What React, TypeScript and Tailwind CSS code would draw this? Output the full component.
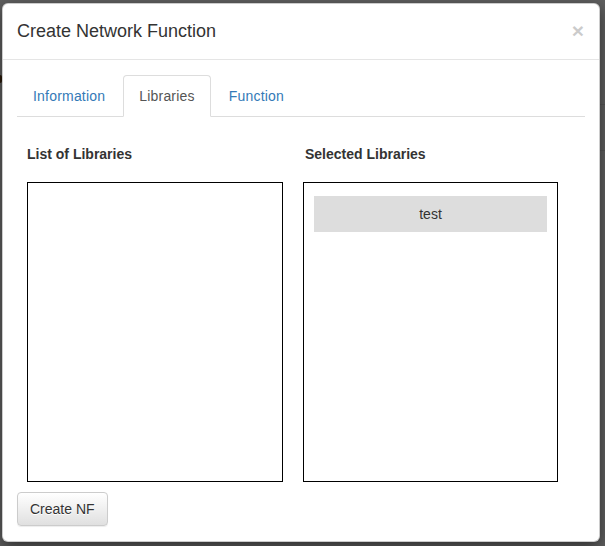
import React from 'react';

const tabs = ['Information', 'Libraries', 'Function'];

const App: React.FC = () => {
  const active = 'Libraries';
  const selected = ['test'];

  return (
    <div
      className="relative h-[546px] w-[605px] overflow-hidden bg-[#5f5f5f] pl-[2px] pt-[3px]"
      style={{ fontFamily: '"Liberation Sans", Arial, sans-serif' }}
    >
      {/* bits of the page behind the backdrop */}
      <div className="absolute left-0 top-[75px] h-[8px] w-[2px] rounded-r bg-[#2a1a0a]" />
      <div className="absolute right-0 top-[104px] h-px w-[6px] bg-[#555]" />
      <div className="absolute right-0 top-[150px] h-px w-[6px] bg-[#555]" />

      {/* Modal */}
      <div className="relative flex h-[539px] w-[598px] flex-col rounded-md border border-black/20 bg-white text-sm text-[#333] shadow-[0_5px_15px_rgba(0,0,0,0.5)]">
        {/* Header */}
        <div className="flex items-center justify-between border-b border-[#e5e5e5] px-[14px] pb-[15px] pt-[14px]">
          <h4 className="text-[18px] leading-[26px] text-[#333]">Create Network Function</h4>
          <button className="-mt-[2px] mr-[1px] text-[21px] font-bold leading-none text-black opacity-20">×</button>
        </div>

        {/* Body */}
        <div className="flex flex-1 flex-col px-[14px] py-[15px]">
          <ul className="flex border-b border-[#ddd]">
            {tabs.map((t) => (
              <li key={t} className="-mb-px mr-[2px]">
                <a
                  className={
                    t === active
                      ? 'block rounded-t border border-[#ddd] border-b-transparent bg-white px-[15px] py-[10px] leading-5 tracking-[0.2px] text-[#555]'
                      : 'block rounded-t border border-transparent px-[15px] py-[10px] leading-5 tracking-[0.2px] text-[#337ab7]'
                  }
                >
                  {t}
                </a>
              </li>
            ))}
          </ul>

          {/* Tab content */}
          <div className="grid grid-cols-[256px_256px] gap-x-[20px] pl-[10px] pt-[27px]">
            <div>
              <h5 className="text-sm font-bold leading-5 text-[#333]">List of Libraries</h5>
              <div className="mt-[18px] h-[300px] border border-black" />
            </div>
            <div>
              <h5 className="ml-[2px] text-sm font-bold leading-5 text-[#333]">Selected Libraries</h5>
              <div className="mt-[18px] flex h-[300px] w-[255px] flex-col gap-1 border border-black px-[10px] pt-[13px]">
                {selected.map((s) => (
                  <div key={s} className="flex h-[36px] items-center justify-center bg-[#ddd] text-sm text-[#333]">
                    {s}
                  </div>
                ))}
              </div>
            </div>
          </div>

          <div className="mt-[10px]">
            <button className="h-[34px] rounded border border-[#ccc] bg-gradient-to-b from-white to-[#e0e0e0] px-3 text-sm leading-5 text-[#333] shadow-[inset_0_1px_0_rgba(255,255,255,0.15),0_1px_1px_rgba(0,0,0,0.075)] [text-shadow:0_1px_0_#fff]">
              Create NF
            </button>
          </div>
        </div>
      </div>
    </div>
  );
};

export default App;
